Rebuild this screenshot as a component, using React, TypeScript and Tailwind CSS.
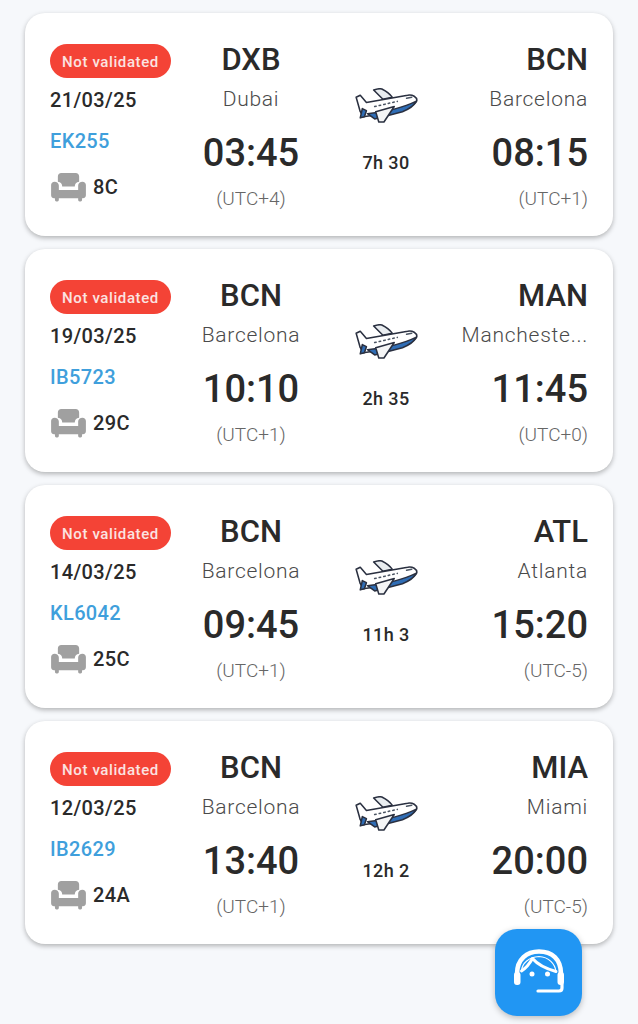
const flights = [
  { date: "21/03/25", code: "EK255", seat: "8C", from: "DXB", fromCity: "Dubai", dep: "03:45", depTz: "(UTC+4)", dur: "7h 30", to: "BCN", toCity: "Barcelona", arr: "08:15", arrTz: "(UTC+1)" },
  { date: "19/03/25", code: "IB5723", seat: "29C", from: "BCN", fromCity: "Barcelona", dep: "10:10", depTz: "(UTC+1)", dur: "2h 35", to: "MAN", toCity: "Mancheste...", arr: "11:45", arrTz: "(UTC+0)" },
  { date: "14/03/25", code: "KL6042", seat: "25C", from: "BCN", fromCity: "Barcelona", dep: "09:45", depTz: "(UTC+1)", dur: "11h 3", to: "ATL", toCity: "Atlanta", arr: "15:20", arrTz: "(UTC-5)" },
  { date: "12/03/25", code: "IB2629", seat: "24A", from: "BCN", fromCity: "Barcelona", dep: "13:40", depTz: "(UTC+1)", dur: "12h 2", to: "MIA", toCity: "Miami", arr: "20:00", arrTz: "(UTC-5)" },
];

function Plane() {
  return (
    <svg width="64" height="35" viewBox="0 0 62 34" fill="none" stroke="#2a3040" strokeWidth="1.5" strokeLinejoin="round" strokeLinecap="round">
      <path d="M19 2 C22 1 25 0 27 1 C31 3 35 6 37 9 L28 11 Z" fill="#e9edf0" />
      <path d="M2 9 L6 7 L12 14 L52 7 C57 6 61 9 61 12 C61 15 57 17 52 19 L22 26 L9 28 L6 23 Z" fill="#ffffff" />
      <path d="M6 29 L8 20 L12 22 L10 28 Z" fill="#2f6db5" />
      <path d="M13 25 C30 23 48 19 60 13 C58 18 52 21 47 23 L20 30 Z" fill="#2f6db5" />
      <path d="M21 23 L39 18 L29 33 L24 33 Z" fill="#f4f5f6" />
      <path d="M20 18 L42 13" stroke="#4b5563" strokeWidth="1.5" strokeDasharray="1.5 3" />
      <path d="M51 10 L56 9" stroke="#4b5563" strokeWidth="1.5" />
    </svg>
  );
}

function Sofa() {
  return (
    <svg width="35" height="29" viewBox="0 0 36 30" fill="#a0a0a0">
      <path d="M7 3.5 C7 1.5 8.5 0 10.5 0 H25.5 C27.5 0 29 1.5 29 3.5 V9 C26 9.5 24.5 11 24.5 14 H11.5 C11.5 11 10 9.5 7 9 Z" />
      <path d="M0 12.5 C0 10.5 1.5 9 3.5 9 C6 9 8 10.5 8 13 V17.5 H28 V13 C28 10.5 30 9 32.5 9 C34.5 9 36 10.5 36 12.5 V23 C36 25 34.5 26 33 26 H3 C1.5 26 0 25 0 23 Z" />
      <rect x="4" y="25" width="4" height="4.5" rx="1.5" />
      <rect x="28" y="25" width="4" height="4.5" rx="1.5" />
    </svg>
  );
}

function Agent() {
  return (
    <svg width="60" height="58" viewBox="0 0 60 58" fill="none" stroke="#ffffff">
      <path d="M8 30 C8 15 18 7.5 30 7.5 C43 7.5 52 15 52 30" strokeWidth="4.6" />
      <path d="M12.5 27 C17 24 21 19 23.5 14.5 C29 21 38 25 47 27.5" strokeWidth="3" strokeLinecap="round" strokeLinejoin="round" />
      <path d="M12.5 27 C13 19 20 13 30 12.5 C40 13 46 20 47 27.5" strokeWidth="1.2" />
      <rect x="5" y="28" width="6.5" height="13" rx="3" fill="#ffffff" stroke="none" />
      <rect x="48.5" y="28" width="6.5" height="13" rx="3" fill="#ffffff" stroke="none" />
      <circle cx="23" cy="30" r="2.5" fill="#ffffff" stroke="none" />
      <circle cx="38.5" cy="30" r="2.5" fill="#ffffff" stroke="none" />
      <path d="M53 40 V44 C53 46 52 47 50 47 H29" strokeWidth="3.2" strokeLinecap="round" />
    </svg>
  );
}

function Card({ f }: { f: (typeof flights)[number] }) {
  return (
    <div className="grid h-[223px] grid-cols-[120px_162px_108px_148px] rounded-[20px] bg-white px-[25px] pt-[31px] shadow-[0_2px_5px_rgba(0,0,0,0.28)]">
      <div className="flex flex-col items-start">
        <div className="flex h-[34px] w-[121px] items-center justify-center rounded-full bg-[#f44336] pt-[2px] text-[15px] font-medium tracking-[0.6px] text-[#fbe3e1]">
          Not validated
        </div>
        <div className="mt-[8px] h-[28px] text-[20px] font-medium leading-[28px] tracking-[0.35px] text-[#2a2a2a]">{f.date}</div>
        <div className="mt-[13px] h-[28px] text-[20px] font-medium leading-[28px] tracking-[0.35px] text-[#3f9fdc]">{f.code}</div>
        <div className="mt-[14px] flex h-[36px] items-center gap-[7px]">
          <span className="ml-[1px]"><Sofa /></span>
          <span className="text-[20px] font-medium leading-[28px] tracking-[0.35px] text-[#2a2a2a]">{f.seat}</span>
        </div>
      </div>
      <div className="flex flex-col items-center">
        <div className="-mt-[1px] h-[35px] text-[31px] font-medium leading-[34px] text-[#2a2a2a]">{f.from}</div>
        <div className="mt-[7px] h-[28px] text-[21px] font-light leading-[28px] tracking-[0.75px] text-[#4a4a4a]">{f.fromCity}</div>
        <div className="mt-[18px] h-[44px] text-[38px] font-medium leading-[44px] text-[#2a2a2a]">{f.dep}</div>
        <div className="mt-[12px] h-[24px] text-[19px] font-light leading-[24px] text-[#666666]">{f.depTz}</div>
      </div>
      <div className="flex flex-col items-center pt-[44px]">
        <Plane />
        <div className="mt-[28px] h-[24px] text-[18px] font-medium leading-[24px] tracking-[0.4px] text-[#2a2a2a]">{f.dur}</div>
      </div>
      <div className="flex flex-col items-end">
        <div className="-mt-[1px] h-[35px] text-[31px] font-medium leading-[34px] text-[#2a2a2a]">{f.to}</div>
        <div className="mt-[7px] h-[28px] text-[21px] font-light leading-[28px] tracking-[0.75px] text-[#4a4a4a]">{f.toCity}</div>
        <div className="mt-[18px] h-[44px] text-[38px] font-medium leading-[44px] text-[#2a2a2a]">{f.arr}</div>
        <div className="mt-[12px] h-[24px] text-[19px] font-light leading-[24px] text-[#666666]">{f.arrTz}</div>
      </div>
    </div>
  );
}

export default function App() {
  return (
    <div className="relative h-[1024px] w-[638px] overflow-hidden bg-[#f6f8fb] font-['Roboto',sans-serif]">
      <div className="flex flex-col gap-[13px] pl-[25px] pr-[25px] pt-[13px]">
        {flights.map((f) => (
          <Card key={f.code} f={f} />
        ))}
      </div>
      <div className="absolute left-[495px] top-[929px] flex h-[87px] w-[87px] items-center justify-center rounded-[22px] bg-[#2196f3] shadow-[0_2px_6px_rgba(0,0,0,0.25)]">
        <Agent />
      </div>
    </div>
  );
}
